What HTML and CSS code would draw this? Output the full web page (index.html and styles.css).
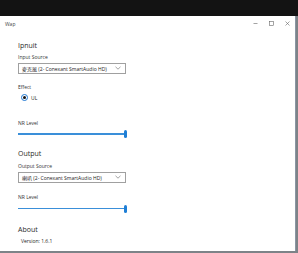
FILE: index.html
```html
<!DOCTYPE html>
<html>
<head>
<meta charset="utf-8">
<link rel="stylesheet" href="styles.css">
</head>
<body>
<div class="screen">
  <div class="topbar"></div>
  <div class="window">
    <div class="titlebar">
      <span class="title">Wap</span>
      <div class="controls">
        <span class="ctl">
          <svg width="5" height="5" viewBox="0 0 5 5"><path d="M0.5 2.5H4.5" stroke="#666" stroke-width="0.6"/></svg>
        </span>
        <span class="ctl">
          <svg width="5" height="5" viewBox="0 0 5 5"><rect x="0.5" y="0.5" width="4" height="4" fill="none" stroke="#666" stroke-width="0.6"/></svg>
        </span>
        <span class="ctl">
          <svg width="5" height="5" viewBox="0 0 5 5"><path d="M0.5 0.5L4.5 4.5M4.5 0.5L0.5 4.5" stroke="#666" stroke-width="0.6"/></svg>
        </span>
      </div>
    </div>
    <div class="content">
      <div class="h first">Ipnuit</div>
      <div class="lbl">Input Source</div>
      <div class="select"><span>麥克風 (2- Conexant SmartAudio HD)</span>
        <svg class="chev" width="6" height="4" viewBox="0 0 6 4"><path d="M0.5 0.8L3 3.2L5.5 0.8" fill="none" stroke="#666" stroke-width="0.6"/></svg>
      </div>
      <div class="lbl effect">Effect</div>
      <div class="radio"><span class="dot"></span><span class="rtext">UL</span></div>
      <div class="lbl nr">NR Level</div>
      <div class="slider"><div class="track"></div><div class="thumb"></div></div>

      <div class="h sec">Output</div>
      <div class="lbl os">Output Source</div>
      <div class="select"><span>喇叭 (2- Conexant SmartAudio HD)</span>
        <svg class="chev" width="6" height="4" viewBox="0 0 6 4"><path d="M0.5 0.8L3 3.2L5.5 0.8" fill="none" stroke="#666" stroke-width="0.6"/></svg>
      </div>
      <div class="lbl nr2">NR Level</div>
      <div class="slider"><div class="track"></div><div class="thumb"></div></div>

      <div class="h sec2">About</div>
      <div class="ver">Version: 1.6.1</div>
    </div>
  </div>
</div>
</body>
</html>
```
FILE: styles.css
```css
html, body {
  margin: 0;
  padding: 0;
  background: #ffffff;
}
.screen {
  width: 298px;
  height: 253px;
  overflow: hidden;
  display: flex;
  flex-direction: column;
  font-family: "Open Sans", "Noto Sans CJK TC", sans-serif;
  color: #222;
  background: #7d8388;
}
.topbar {
  height: 16px;
  background: #131313;
  flex: none;
}
.window {
  width: 295px;
  height: 235px;
  background: #fff;
  border-right: 1px solid #8a96a3;
  display: flex;
  flex-direction: column;
}
.titlebar {
  height: 15px;
  display: flex;
  align-items: center;
  justify-content: space-between;
  flex: none;
}
.title {
  font-size: 5px;
  color: #444;
  margin-left: 5px;
}
.controls {
  display: flex;
}
.ctl {
  width: 16px;
  height: 7px;
  display: flex;
  align-items: center;
  justify-content: center;
}
.content {
  padding-left: 18px;
  display: flex;
  flex-direction: column;
  align-items: flex-start;
}
.h {
  font-size: 7px;
  font-weight: 400;
  line-height: 10px;
  color: #2a2a2a;
}
.h.first { margin-top: 10px; }
.h.sec { margin-top: 11px; }
.h.sec2 { margin-top: 12px; }
.lbl {
  font-size: 5px;
  line-height: 7px;
  margin-top: 2.5px;
  color: #333;
}
.lbl.os { margin-top: 3.5px; }
.lbl.effect { margin-top: 10.5px; }
.lbl.nr { margin-top: 18px; }
.lbl.nr2 { margin-top: 11.5px; }
.select {
  margin-top: 2px;
  width: 108px;
  height: 11px;
  border: 1px solid #a0a0a0;
  display: flex;
  align-items: center;
  justify-content: space-between;
  font-size: 5px;
  color: #222;
  padding: 0 4px 0 3px;
  box-sizing: border-box;
}
.select span { white-space: nowrap; }
.chev { flex: none; }
.radio {
  display: flex;
  align-items: center;
  margin-top: 2.5px;
  margin-left: 3px;
  height: 8px;
}
.dot {
  width: 7px;
  height: 7px;
  box-sizing: border-box;
  border-radius: 50%;
  border: 1.2px solid #1d76d2;
  background: #fff;
  display: flex;
  align-items: center;
  justify-content: center;
}
.dot::after {
  content: "";
  width: 3px;
  height: 3px;
  border-radius: 50%;
  background: #111;
}
.rtext {
  font-size: 5px;
  margin-left: 3px;
}
.slider {
  margin-top: 3.5px;
  width: 109px;
  height: 8px;
  display: flex;
  align-items: center;
}
.track {
  flex: 1;
  height: 1.5px;
  background: #3a8fd9;
}
.thumb {
  width: 3px;
  height: 8px;
  border-radius: 1.5px;
  background: #1f7fd6;
}
.ver {
  font-size: 5px;
  line-height: 7px;
  margin-top: 3.5px;
  margin-left: 3px;
  color: #222;
}
```
